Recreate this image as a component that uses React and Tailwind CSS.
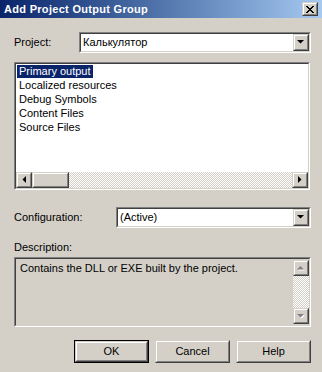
import React from 'react';

// Win2k-style 3D frames
function Raised({ className = '', children }) {
  return (
    <div className={`border border-t-[#d4d0c8] border-l-[#d4d0c8] border-b-[#404040] border-r-[#404040] bg-[#d4d0c8] ${className}`}>
      <div className="w-full h-full border border-t-white border-l-white border-b-[#808080] border-r-[#808080] flex items-center justify-center">
        {children}
      </div>
    </div>
  );
}

function Sunken({ className = '', inner = '', children }) {
  return (
    <div className={`border border-t-[#808080] border-l-[#808080] border-b-white border-r-white ${className}`}>
      <div className={`w-full h-full border border-t-[#404040] border-l-[#404040] border-b-[#d4d0c8] border-r-[#d4d0c8] ${inner}`}>
        {children}
      </div>
    </div>
  );
}

function Arrow({ dir = 'down', disabled = false }) {
  const pts = {
    down: '0,0 7,0 3.5,3.5',
    up: '0,3.5 7,3.5 3.5,0',
    left: '4,0 4,7 0.5,3.5',
    right: '0,0 0,7 3.5,3.5',
  }[dir];
  const vertical = dir === 'down' || dir === 'up';
  const w = vertical ? 7 : 4;
  const h = vertical ? 4 : 7;
  return (
    <svg width={w + 1} height={h + 1} viewBox={`0 0 ${w + 1} ${h + 1}`}>
      {disabled && <polygon points={pts} fill="#ffffff" transform="translate(1,1)" />}
      <polygon points={pts} fill={disabled ? '#808080' : '#000000'} />
    </svg>
  );
}

function Combo({ value, className = '' }) {
  return (
    <Sunken className={`h-[21px] ${className}`} inner="bg-white flex items-center">
      <span className="pl-[2px] text-black">{value}</span>
      <Raised className="ml-auto w-[16px] h-[17px]">
        <Arrow dir="down" />
      </Raised>
    </Sunken>
  );
}

const checker = 'bg-[repeating-conic-gradient(#ffffff_0_25%,#d4d0c8_0_50%)] bg-[length:2px_2px]';

const ITEMS = ['Primary output', 'Localized resources', 'Debug Symbols', 'Content Files', 'Source Files'];

export default function App() {
  return (
    <div className="w-[322px] h-[372px] bg-[#d4d0c8] font-['Liberation_Sans',Arial,sans-serif] text-[11px] text-black overflow-hidden">
      {/* Title bar */}
      <div className="h-[18px] bg-gradient-to-r from-[#0a246a] to-[#a6caf0] flex items-center pl-[4px] pr-[4px]">
        <span className="text-white font-bold text-[11px] tracking-[0.3px] leading-none">Add Project Output Group</span>
        <Raised className="ml-auto w-[16px] h-[14px]">
          <svg width="8" height="7" viewBox="0 0 8 7">
            <path d="M0 0 L7 7 M1 0 L8 7 M7 0 L0 7 M8 0 L1 7" stroke="#000" strokeWidth="1" shapeRendering="crispEdges" />
          </svg>
        </Raised>
      </div>

      <div className="pl-[14px] pr-[11px]">
        {/* Project */}
        <div className="flex items-center mt-[14px]">
          <span>Project:</span>
          <Combo value="Калькулятор" className="ml-auto w-[232px]" />
        </div>

        {/* Output list */}
        <Sunken className="mt-[9px] h-[128px] mr-[1px]" inner="bg-white flex flex-col">
          <div className="flex-1 pl-[1px] pt-0">
            {ITEMS.map((item, i) => (
              <div key={item} className="h-[14px] flex items-center">
                <span
                  className={`px-[2px] leading-[13px] ${i === 0 ? 'bg-[#0a246a] text-white' : ''}`}
                >
                  {item}
                </span>
              </div>
            ))}
          </div>
          <div className="h-[16px] flex">
            <Raised className="w-[16px] h-[16px]">
              <Arrow dir="left" />
            </Raised>
            <Raised className="w-[37px] h-[16px]" />
            <div className={`flex-1 ${checker}`} />
            <Raised className="w-[16px] h-[16px]">
              <Arrow dir="right" />
            </Raised>
          </div>
        </Sunken>

        {/* Configuration */}
        <div className="flex items-center mt-[17px]">
          <span>Configuration:</span>
          <Combo value="(Active)" className="ml-auto w-[195px]" />
        </div>

        {/* Description */}
        <div className="mt-[13px] leading-[13px]">Description:</div>
        <Sunken className="mt-[3px] h-[70px]" inner="flex">
          <div className="flex-1 pl-[4px] pt-[2px] leading-[14px]">Contains the DLL or EXE built by the project.</div>
          <div className="w-[16px] flex flex-col mt-[1px] mb-[1px]">
            <Raised className="w-[16px] h-[16px]">
              <Arrow dir="up" disabled />
            </Raised>
            <div className={`flex-1 ${checker}`} />
            <Raised className="w-[16px] h-[16px]">
              <Arrow dir="down" disabled />
            </Raised>
          </div>
        </Sunken>

        {/* Buttons */}
        <div className="flex justify-end gap-[6px] mt-[13px]">
          <div className="w-[75px] h-[23px] border border-black">
            <Raised className="w-full h-full">OK</Raised>
          </div>
          <Raised className="w-[75px] h-[23px]">Cancel</Raised>
          <Raised className="w-[75px] h-[23px]">Help</Raised>
        </div>
      </div>
    </div>
  );
}
